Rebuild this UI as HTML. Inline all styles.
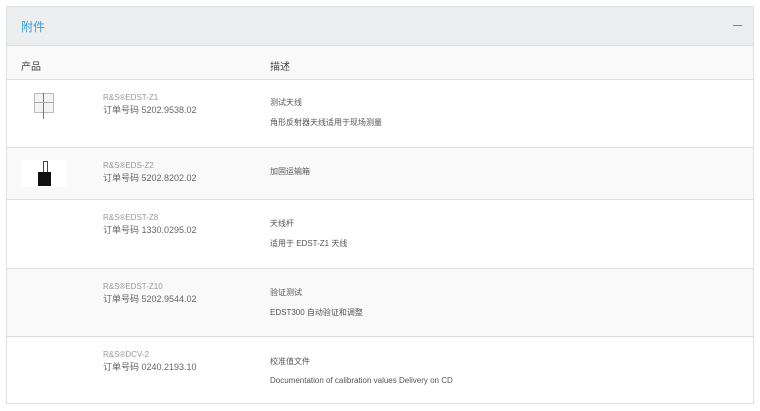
<!DOCTYPE html>
<html><head><meta charset="utf-8"><style>
body{margin:0;background:#fff;font-family:"Liberation Sans","Noto Sans CJK SC",sans-serif;}
.box{position:absolute;left:6px;top:6px;width:748px;height:398px;border:1px solid #e0e0e0;box-sizing:border-box;}
.hd{position:absolute;left:0;top:0;right:0;height:39px;background:#eceef0;border-bottom:1px solid #dcdcdc;box-sizing:border-box;}
.hd span{position:absolute;left:14px;top:11px;font-size:12px;color:#3a9ad9;}
.hd i{position:absolute;right:11px;top:18px;width:9px;height:1px;background:#3a9ad9;}
.row{position:absolute;left:0;right:0;border-bottom:1px solid #dcdcdc;box-sizing:border-box;}
.g{background:#f9f9f9;}
.t{position:absolute;font-size:10px;color:#444;white-space:nowrap;}
.n{font-size:8px;color:#999;}
.o{font-size:9px;color:#666;}
.d{font-size:8px;color:#555;}
</style></head><body>
<div class="box">
<div class="hd"><span>附件</span><i></i></div>
<div class="row g" style="top:39px;height:34px;"><span class="t" style="left:14px;top:12px;font-size:10px">产品</span><span class="t" style="left:263px;top:12px;font-size:10px">描述</span></div>
<div class="row" style="top:73px;height:68px;">
 <div style="position:absolute;left:27px;top:13px;width:18px;height:18px;border:1px solid #bbb;background:#f3f3f3"></div>
 <div style="position:absolute;left:36px;top:13px;width:1px;height:26px;background:#777"></div>
 <div style="position:absolute;left:27px;top:22px;width:20px;height:1px;background:#aaa"></div>
 <span class="t n" style="left:96px;top:13px">R&amp;S®EDST-Z1</span><span class="t o" style="left:96px;top:23px">订单号码 5202.9538.02</span>
 <span class="t d" style="left:263px;top:17px">测试天线</span><span class="t d" style="left:263px;top:37px">角形反射器天线适用于现场测量</span></div>
<div class="row g" style="top:141px;height:52px;">
 <div style="position:absolute;left:14px;top:12px;width:46px;height:27px;background:#fff"></div>
 <div style="position:absolute;left:36px;top:13px;width:3px;height:11px;border:1px solid #444;border-bottom:none"></div>
 <div style="position:absolute;left:31px;top:24px;width:13px;height:14px;background:#111"></div>
 <span class="t n" style="left:96px;top:13px">R&amp;S®EDS-Z2</span><span class="t o" style="left:96px;top:23px">订单号码 5202.8202.02</span>
 <span class="t d" style="left:263px;top:18px">加固运输箱</span></div>
<div class="row" style="top:193px;height:69px;">
 <span class="t n" style="left:96px;top:13px">R&amp;S®EDST-Z8</span><span class="t o" style="left:96px;top:23px">订单号码 1330.0295.02</span>
 <span class="t d" style="left:263px;top:18px">天线杆</span><span class="t d" style="left:263px;top:38px">适用于 EDST-Z1 天线</span></div>
<div class="row g" style="top:262px;height:68px;">
 <span class="t n" style="left:96px;top:13px">R&amp;S®EDST-Z10</span><span class="t o" style="left:96px;top:23px">订单号码 5202.9544.02</span>
 <span class="t d" style="left:263px;top:18px">验证测试</span><span class="t d" style="left:263px;top:38px">EDST300 自动验证和调整</span></div>
<div class="row" style="top:330px;height:67px;border-bottom:none">
 <span class="t n" style="left:96px;top:13px">R&amp;S®DCV-2</span><span class="t o" style="left:96px;top:23px">订单号码 0240.2193.10</span>
 <span class="t d" style="left:263px;top:19px">校准值文件</span><span class="t d" style="left:263px;top:39px">Documentation of calibration values Delivery on CD</span></div>
</div>
</body></html>
